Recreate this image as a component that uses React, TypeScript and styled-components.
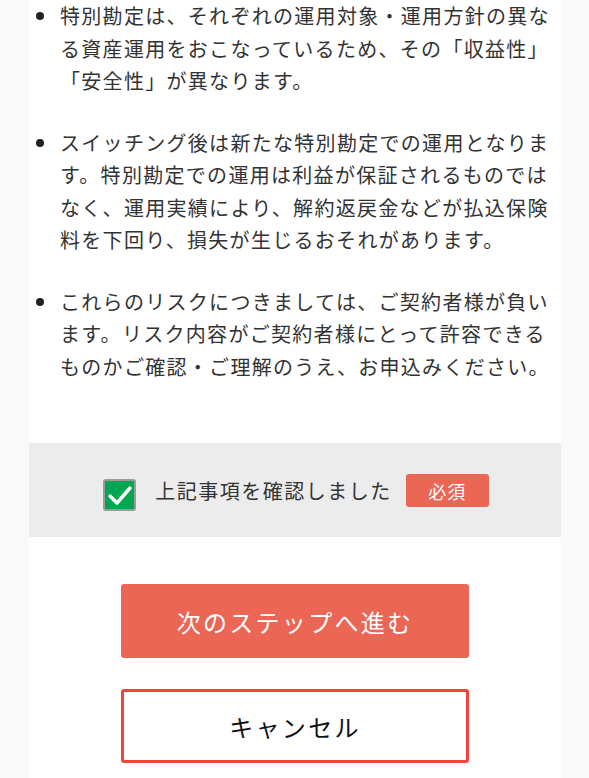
import React from "react";
import styled, { createGlobalStyle } from "styled-components";

const GlobalStyle = createGlobalStyle`
  html, body {
    margin: 0;
    padding: 0;
    background: #f9f9f9;
    overflow: hidden;
  }
  body {
    font-family: "Noto Sans CJK JP", "Noto Sans", sans-serif;
    color: #333333;
  }
`;

const Column = styled.div`
  width: 532px;
  margin-left: 29px;
  background: #ffffff;
  min-height: 100vh;
`;

const NoteList = styled.ul`
  list-style: none;
  margin: 0;
  padding: 0 6px 60px 7px;
  display: flex;
  flex-direction: column;
  gap: 29px;
`;

const NoteItem = styled.li`
  display: flex;
  align-items: flex-start;
  font-size: 20px;
  line-height: 32.5px;
  letter-spacing: 1.3px;
`;

const Dot = styled.span`
  flex: none;
  width: 8px;
  height: 8px;
  border-radius: 50%;
  background: #222222;
  margin: 12px 16px 0 0;
`;

const NoteText = styled.span`
  flex: 1;
`;

const ConfirmBox = styled.div`
  background: #ececec;
  padding: 31px 0 26px;
  display: flex;
  justify-content: center;
`;

const ConfirmRow = styled.label`
  display: flex;
  align-items: flex-start;
  cursor: pointer;
  margin-left: 2px;
`;

const Check = styled.span<{ $checked: boolean }>`
  box-sizing: border-box;
  width: 33px;
  height: 32px;
  margin-top: 5px;
  border: 2px solid #9b9b9b;
  border-radius: 3px;
  background: ${(p) => (p.$checked ? "#00a651" : "#ffffff")};
  display: flex;
  align-items: center;
  justify-content: center;
`;

const ConfirmText = styled.span`
  margin-left: 19px;
  font-size: 20px;
  line-height: 33px;
  letter-spacing: 1.5px;
  color: #333333;
`;

const Badge = styled.span`
  margin-left: 14px;
  width: 83px;
  height: 33px;
  border-radius: 3px;
  background: #ec6656;
  color: #ffffff;
  font-size: 18px;
  letter-spacing: 1px;
  display: flex;
  align-items: center;
  justify-content: center;
`;

const Actions = styled.div`
  padding: 47px 0 15px;
  display: flex;
  flex-direction: column;
  align-items: center;
  gap: 31px;
`;

const ActionButton = styled.button<{ $primary?: boolean }>`
  box-sizing: border-box;
  width: 348px;
  height: 74px;
  border-radius: 3px;
  border: ${(p) => (p.$primary ? "none" : "3px solid #f1453a")};
  background: ${(p) => (p.$primary ? "#ec6656" : "#ffffff")};
  color: ${(p) => (p.$primary ? "#ffffff" : "#111111")};
  font-family: "Noto Sans CJK JP", "Noto Sans", sans-serif;
  font-size: 24px;
  letter-spacing: 2.3px;
  cursor: pointer;
`;

const notes = [
  "特別勘定は、それぞれの運用対象・運用方針の異なる資産運用をおこなっているため、その「収益性」「安全性」が異なります。",
  "スイッチング後は新たな特別勘定での運用となります。特別勘定での運用は利益が保証されるものではなく、運用実績により、解約返戻金などが払込保険料を下回り、損失が生じるおそれがあります。",
  "これらのリスクにつきましては、ご契約者様が負います。リスク内容がご契約者様にとって許容できるものかご確認・ご理解のうえ、お申込みください。",
];

const App = () => {
  const [checked, setChecked] = React.useState(true);
  return (
    <>
      <GlobalStyle />
      <Column>
        <NoteList>
          {notes.map((n) => (
            <NoteItem key={n}>
              <Dot />
              <NoteText>{n}</NoteText>
            </NoteItem>
          ))}
        </NoteList>
        <ConfirmBox>
          <ConfirmRow onClick={() => setChecked(!checked)}>
            <Check $checked={checked}>
              {checked && (
                <svg width="26" height="22" viewBox="0 0 26 22">
                  <polyline
                    points="3,12 10,19 23,4"
                    fill="none"
                    stroke="#ffffff"
                    strokeWidth="3.5"
                    strokeLinecap="round"
                    strokeLinejoin="round"
                  />
                </svg>
              )}
            </Check>
            <ConfirmText>上記事項を確認しました</ConfirmText>
            <Badge>必須</Badge>
          </ConfirmRow>
        </ConfirmBox>
        <Actions>
          <ActionButton $primary>次のステップへ進む</ActionButton>
          <ActionButton>キャンセル</ActionButton>
        </Actions>
      </Column>
    </>
  );
};

export default App;
